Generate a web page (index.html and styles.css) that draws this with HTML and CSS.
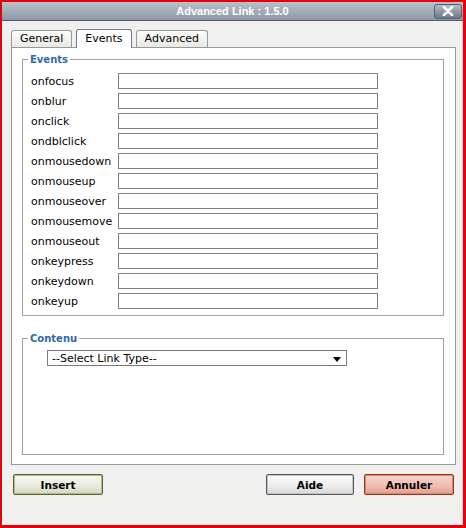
FILE: index.html
```html
<!DOCTYPE html>
<html lang="fr">
<head>
  <meta charset="UTF-8" />
  <title>Advanced Link : 1.5.0</title>
  <link rel="stylesheet" href="styles.css">
</head>
<body>
  <div class="window">
    <div class="titlebar">
      <span></span>
      <span class="title">Advanced Link : 1.5.0</span>
      <span class="close-cell">
        <span class="close-btn">
          <svg width="12" height="10" viewBox="0 0 12 10">
            <path d="M2 1 L10 9 M10 1 L2 9" stroke="#fff" stroke-width="2.6" stroke-linecap="round" />
          </svg>
        </span>
      </span>
    </div>

    <div class="dialog">
      <div class="tabs">
        <span class="tab">General</span>
        <span class="tab current">Events</span>
        <span class="tab">Advanced</span>
      </div>

      <div class="panel">
        <fieldset class="group">
          <legend>Events</legend>
          <div class="row"><label>onfocus</label><input type="text"></div>
          <div class="row"><label>onblur</label><input type="text"></div>
          <div class="row"><label>onclick</label><input type="text"></div>
          <div class="row"><label>ondblclick</label><input type="text"></div>
          <div class="row"><label>onmousedown</label><input type="text"></div>
          <div class="row"><label>onmouseup</label><input type="text"></div>
          <div class="row"><label>onmouseover</label><input type="text"></div>
          <div class="row"><label>onmousemove</label><input type="text"></div>
          <div class="row"><label>onmouseout</label><input type="text"></div>
          <div class="row"><label>onkeypress</label><input type="text"></div>
          <div class="row"><label>onkeydown</label><input type="text"></div>
          <div class="row"><label>onkeyup</label><input type="text"></div>
        </fieldset>

        <fieldset class="group content">
          <legend>Contenu</legend>
          <div class="select">
            <span>--Select Link Type--</span>
            <svg width="8" height="5" viewBox="0 0 8 5"><path d="M0 0 H8 L4 5 Z" fill="#000" /></svg>
          </div>
        </fieldset>
      </div>

      <div class="actions">
        <button class="btn insert">Insert</button>
        <span class="spacer"></span>
        <button class="btn help">Aide</button>
        <button class="btn cancel">Annuler</button>
      </div>
    </div>
  </div>
</body>
</html>
```

FILE: styles.css
```css
html, body {
  margin: 0;
  padding: 0;
}
body {
  font-family: 'DejaVu Sans', Verdana, sans-serif;
  font-size: 11px;
  color: #000;
}
.window {
  box-sizing: border-box;
  width: 466px;
  height: 528px;
  border: solid #e8000b;
  border-width: 2px 3px 3px 2px;
  background: #f0f0ee;
  display: flex;
  flex-direction: column;
}

/* title bar */
.titlebar {
  height: 18px;
  border-bottom: 1px solid #4f5c68;
  background: linear-gradient(#b9c2cb, #8d99a5);
  display: grid;
  grid-template-columns: 1fr auto 1fr;
  align-items: center;
}
.title {
  font-family: 'Liberation Sans', Arial, sans-serif;
  font-weight: bold;
  font-size: 11px;
  color: #fff;
}
.close-cell {
  display: flex;
  justify-content: flex-end;
  padding-right: 1px;
}
.close-btn {
  box-sizing: border-box;
  width: 28px;
  height: 15px;
  border: 1px solid #56636f;
  border-radius: 3px;
  background: linear-gradient(#b2bcc5, #6c7a87);
  display: flex;
  justify-content: center;
  align-items: center;
}

/* dialog body */
.dialog {
  flex: 1;
  display: flex;
  flex-direction: column;
  padding: 9px 6px 0 8px;
  border-left: 1px solid #fff;
  border-right: 1px solid #d3d9e0;
}
.tabs {
  display: flex;
  align-items: flex-end;
  gap: 4px;
  height: 17px;
}
.tab {
  height: 16px;
  line-height: 16px;
  padding: 0 8px;
  border: 1px solid #919b9c;
  border-bottom: none;
  border-radius: 3px 3px 0 0;
  background: linear-gradient(#fdfdfb, #e9e8e2);
}
.tab.current {
  position: relative;
  z-index: 1;
  height: 18px;
  line-height: 17px;
  margin-bottom: -1px;
  background: #fff;
  border-color: #6f7e8c;
}
.panel {
  flex: 1;
  display: flex;
  flex-direction: column;
  gap: 16px;
  padding: 5px 11px 9px 10px;
  border: 1px solid #919b9c;
  background: #fff;
}
.group {
  margin: 0;
  padding: 5px 8px 4px 8px;
  border: 1px solid #a0a0a0;
}
.group legend {
  margin-left: -3px;
  padding: 0 2px;
  font-size: 10px;
  font-weight: bold;
  line-height: 13px;
  color: #2f6aa9;
}
.group.content {
  flex: 1;
}
.row {
  display: flex;
  align-items: center;
  height: 20px;
}
.row label {
  width: 87px;
}
.row input {
  box-sizing: border-box;
  width: 260px;
  height: 16px;
  margin: 0;
  padding: 0 3px;
  border: 1px solid #808080;
  font-family: inherit;
  font-size: 11px;
}
.select {
  box-sizing: border-box;
  width: 300px;
  height: 16px;
  margin-left: 16px;
  padding: 0 5px 0 4px;
  border: 1px solid #7a7a7a;
  display: flex;
  justify-content: space-between;
  align-items: center;
}
.select svg {
  margin-top: 3px;
}

/* buttons */
.actions {
  display: flex;
  gap: 10px;
  padding: 9px 2px 30px 2px;
}
.spacer {
  flex: 1;
}
.btn {
  width: 90px;
  height: 21px;
  padding: 0;
  border: 1px solid;
  border-radius: 2px;
  font-family: 'DejaVu Sans', Verdana, sans-serif;
  font-size: 10.5px;
  font-weight: bold;
  color: #000;
}
.btn.insert {
  border-color: #5d6533;
  box-shadow: inset 0 0 0 1px #b4b88a;
  background: linear-gradient(#fafaf4, #e9eadc 60%, #d4d6c0);
}
.btn.help {
  width: 88px;
  border-color: #575757;
  box-shadow: inset 0 0 0 1px #c4c4c4;
  background: linear-gradient(#fbfbfb, #ececec 60%, #d6d6d6);
}
.btn.cancel {
  border-color: #98331f;
  box-shadow: inset 0 0 0 1px #d88a78;
  background: linear-gradient(#f7d6ce, #f0bcb0 60%, #e39c8a);
}
```
